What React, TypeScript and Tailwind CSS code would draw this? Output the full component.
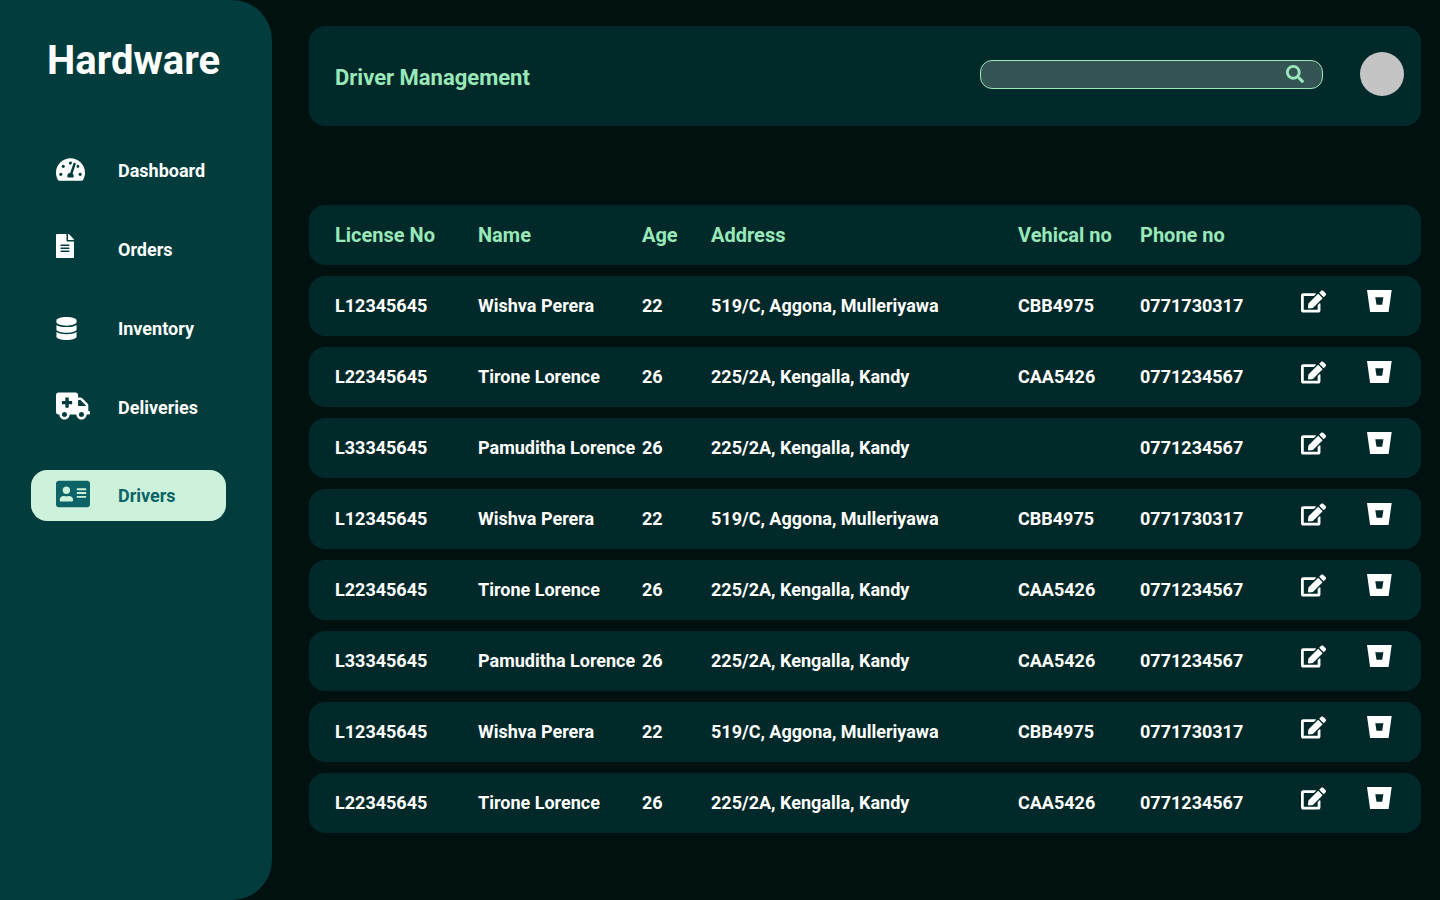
import React, { type ReactNode } from 'react';
import {
  FaAddressCard,
  FaAmbulance,
  FaDatabase,
  FaEdit,
  FaFileAlt,
  FaSearch,
  FaTachometerAlt,
} from 'react-icons/fa';

function NavIcon({ children }: { children: ReactNode }) {
  return (
    <svg viewBox="0 0 34 32" className="h-8 w-[34px] shrink-0 overflow-visible" aria-hidden="true">
      {children}
    </svg>
  );
}

function BucketIcon() {
  return (
    <svg viewBox="0 0 25 23" className="h-[23px] w-[25px]" fill="currentColor" fillRule="evenodd" aria-hidden="true">
      <path d="M0 0h24.700l-3.100 22H3.100ZM8.300 7.300l1.200 7.400h5.700l1.200-7.400Z" />
    </svg>
  );
}

const navItems = [
  { label: 'Dashboard', icon: <FaTachometerAlt size={29} x={0} y={0} /> },
  { label: 'Orders', icon: <FaFileAlt size={24} x={-3} y={0} /> },
  { label: 'Inventory', icon: <FaDatabase size={23} x={-1} y={4} /> },
  { label: 'Deliveries', icon: <FaAmbulance size={34} x={0} y={-3} /> },
];

const wishva = ['L12345645', 'Wishva Perera', '22', '519/C, Aggona, Mulleriyawa', 'CBB4975', '0771730317'];
const tirone = ['L22345645', 'Tirone Lorence', '26', '225/2A, Kengalla, Kandy', 'CAA5426', '0771234567'];
const pamuditha = ['L33345645', 'Pamuditha Lorence', '26', '225/2A, Kengalla, Kandy', 'CAA5426', '0771234567'];
const pamudithaUnassigned = ['L33345645', 'Pamuditha Lorence', '26', '225/2A, Kengalla, Kandy', '', '0771234567'];

const drivers = [wishva, tirone, pamudithaUnassigned, wishva, tirone, pamuditha, wishva, tirone];

const columns = ['License No', 'Name', 'Age', 'Address', 'Vehical no', 'Phone no'];

function Sidebar() {
  return (
    <aside className="w-[272px] shrink-0 rounded-r-[40px] bg-[#023c3c] text-white">
      <h1 className="pt-[37px] pl-[47px] text-[40px] leading-12 font-bold">Hardware</h1>
      <nav className="mt-[60px] flex flex-col gap-[37px] pr-[46px] pl-[31px] text-lg font-bold">
        <div className="flex flex-col gap-7">
          {navItems.map((item) => (
            <a key={item.label} href="#" className="flex h-[51px] items-center gap-7 rounded-2xl pl-[25px]">
              <NavIcon>{item.icon}</NavIcon>
              {item.label}
            </a>
          ))}
        </div>
        <a
          href="#"
          aria-current="page"
          className="flex h-[51px] items-center gap-7 rounded-2xl bg-[#cdf2dc] pl-[25px] text-[#0d6365]"
        >
          <NavIcon>
            <FaAddressCard size={34} x={0} y={-3} />
          </NavIcon>
          Drivers
        </a>
      </nav>
    </aside>
  );
}

function Header() {
  return (
    <header className="flex h-[100px] items-center rounded-2xl bg-[#022929] pr-[17px] pb-1 pl-[26px]">
      <h2 className="pt-2 text-[22px] leading-7 font-bold text-[#98e8b9]">Driver Management</h2>
      <label className="mr-[37px] ml-auto flex h-[29px] w-[343px] items-center rounded-xl border border-[#98e8b9] bg-[#355454] pr-[18px] pl-3 text-[#98e8b9]">
        <input type="search" aria-label="Search drivers" className="min-w-0 flex-1 bg-transparent text-sm outline-none" />
        <FaSearch className="h-[18px] w-[18px]" aria-hidden="true" />
      </label>
      <button type="button" aria-label="Account" className="h-11 w-11 rounded-full bg-[#c4c4c4]" />
    </header>
  );
}

function DriverTable() {
  return (
    <table className="mt-[68px] w-full table-fixed border-separate border-spacing-x-0 border-spacing-y-[11px] text-left">
      <colgroup>
        <col className="w-[169px]" />
        <col className="w-[164px]" />
        <col className="w-[69px]" />
        <col />
        <col className="w-[122px]" />
        <col className="w-[161px]" />
        <col className="w-[66px]" />
        <col className="w-[54px]" />
      </colgroup>
      <thead>
        <tr className="h-[60px] text-xl text-[#98e8b9]">
          {columns.map((name) => (
            <th key={name} scope="col" className="bg-[#022929] p-0 font-bold whitespace-nowrap first:rounded-l-2xl first:pl-[26px]">
              {name}
            </th>
          ))}
          <td colSpan={2} className="rounded-r-2xl bg-[#022929] p-0" />
        </tr>
      </thead>
      <tbody>
        {drivers.map((driver, row) => (
          <tr key={row} className="h-[60px] text-lg font-bold text-white">
            {driver.map((value, i) => (
              <td key={columns[i]} className="bg-[#022929] p-0 whitespace-nowrap first:rounded-l-2xl first:pl-[26px]">
                {value}
              </td>
            ))}
            <td className="bg-[#022929] p-0 pt-3.5 align-top">
              <button type="button" aria-label={`Edit ${driver[1]}`} className="block">
                <FaEdit className="h-[23px] w-[25px]" aria-hidden="true" />
              </button>
            </td>
            <td className="rounded-r-2xl bg-[#022929] p-0 pt-3.5 align-top">
              <button type="button" aria-label={`Delete ${driver[1]}`} className="block">
                <BucketIcon />
              </button>
            </td>
          </tr>
        ))}
      </tbody>
    </table>
  );
}

export default function App() {
  return (
    <div className="flex min-h-screen bg-[#01110f] font-['Roboto',sans-serif]">
      <Sidebar />
      <main className="min-w-0 flex-1 pt-[26px] pr-[19px] pl-[37px]">
        <Header />
        <DriverTable />
      </main>
    </div>
  );
}
